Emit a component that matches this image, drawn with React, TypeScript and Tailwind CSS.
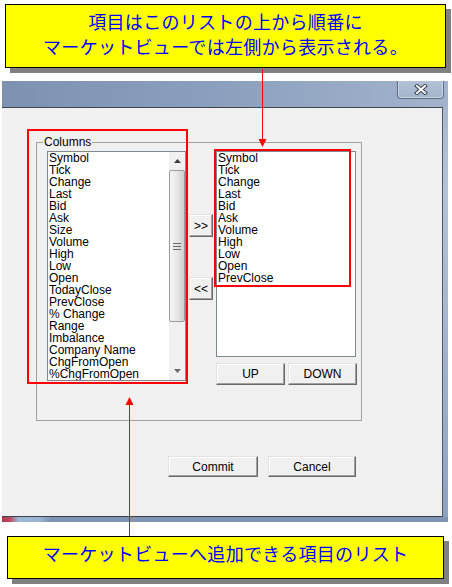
import React from "react";

const leftItems = [
  "Symbol", "Tick", "Change", "Last", "Bid", "Ask", "Size", "Volume", "High", "Low", "Open",
  "TodayClose", "PrevClose", "% Change", "Range", "Imbalance", "Company Name", "ChgFromOpen", "%ChgFromOpen",
];
const rightItems = ["Symbol", "Tick", "Change", "Last", "Bid", "Ask", "Volume", "High", "Low", "Open", "PrevClose"];

const btn =
  "flex items-center justify-center bg-[#f0f0f0] border border-t-[#e3e3e3] border-l-[#e3e3e3] border-r-[#696969] border-b-[#696969] shadow-[inset_-1px_-1px_0_#a0a0a0,inset_1px_1px_0_#ffffff] leading-[12px]";

export default function App() {
  return (
    <div className="relative w-[452px] h-[587px] bg-white overflow-hidden font-['Liberation_Sans',sans-serif] text-[12px] text-black">
      {/* top callout */}
      <div className="pt-[4px] pl-[5px]">
        <div className="w-[441px] h-[64px] bg-[#ffff00] border border-black shadow-[5px_5px_0_#808080] pt-[4px] text-center text-[#0000ff] text-[18px] tracking-[0.3px] leading-[25px] font-['Noto_Sans_CJK_JP',sans-serif]">
          <div>項目はこのリストの上から順番に</div>
          <div>マーケットビューでは左側から表示される。</div>
        </div>
      </div>

      {/* window */}
      <div className="mt-[13px] ml-[2px] w-[446px] flex flex-col">
        <div className="relative h-[26px] bg-[linear-gradient(to_right,#7d91b0,#8a9ebd_45%,#a2b3cb)]">
          <div className="absolute top-0 right-[4px] w-[47px] h-[18px] rounded-b-[4px] border border-t-0 border-[#5d6d87] bg-[linear-gradient(to_bottom,#b3c2d6,#a2b3cb)] shadow-[inset_1px_0_0_#c9d4e3,inset_-1px_-1px_0_#c9d4e3] flex items-center justify-center">
            <svg width="14" height="11" viewBox="0 0 14 11">
              <path d="M3 2 L11 9 M11 2 L3 9" stroke="#3b4454" strokeWidth="4" strokeLinecap="square" />
              <path d="M3 2 L11 9 M11 2 L3 9" stroke="#ffffff" strokeWidth="2" strokeLinecap="square" />
            </svg>
          </div>
        </div>
        <div className="flex">
          <div className="w-[441px] h-[410px] bg-[#f0f0f0] border-t border-r border-b border-t-[#3f4650] border-r-[#4f5866] border-b-[#3a4250] flex flex-col">
            <fieldset className="ml-[34px] mt-[28px] w-[325px] h-[285px] border border-[#a0a0a0] pl-[6px] pr-[4px]">
              <legend className="px-[1px] leading-[12px]">Columns</legend>
              <div className="flex items-start mt-[3px]">
                {/* left list */}
                <div className="ml-[4px] w-[139px] h-[230px] border border-[#828790] bg-white flex">
                  <div className="flex-1 pl-[1px] flex flex-col overflow-hidden">
                    {leftItems.map((t) => (
                      <div key={t} className="h-[12px] leading-[12px] whitespace-nowrap">
                        {t}
                      </div>
                    ))}
                  </div>
                  <div className="w-[16px] bg-[#f0f0f0] flex flex-col">
                    <div className="h-[18px] flex items-center justify-center">
                      <svg width="7" height="4" viewBox="0 0 7 4">
                        <path d="M3.5 0 L7 4 L0 4 Z" fill="#3c3c3c" />
                      </svg>
                    </div>
                    <div className="h-[152px] rounded-[2px] border border-[#9b9b9b] bg-[linear-gradient(to_right,#f6f6f6,#e6e6e6_50%,#cfcfcf)] flex items-center justify-center">
                      <svg width="8" height="7" viewBox="0 0 8 7">
                        <path d="M0 0.5 H8 M0 3.5 H8 M0 6.5 H8" stroke="#6a6a6a" strokeWidth="1" />
                      </svg>
                    </div>
                    <div className="flex-1" />
                    <div className="h-[18px] flex items-center justify-center">
                      <svg width="7" height="4" viewBox="0 0 7 4">
                        <path d="M0 0 L7 0 L3.5 4 Z" fill="#6a6a6a" />
                      </svg>
                    </div>
                  </div>
                </div>
                {/* move buttons */}
                <div className="ml-[3px] w-[24px] flex flex-col">
                  <div className={`${btn} mt-[63px] h-[23px]`}>&gt;&gt;</div>
                  <div className={`${btn} mt-[40px] h-[23px]`}>&lt;&lt;</div>
                </div>
                {/* right list */}
                <div className="ml-[3px] flex flex-col">
                  <div className="w-[140px] h-[206px] border border-[#828790] bg-white pl-[1px] flex flex-col">
                    {rightItems.map((t) => (
                      <div key={t} className="h-[12px] leading-[12px] whitespace-nowrap">
                        {t}
                      </div>
                    ))}
                  </div>
                  <div className="mt-[6px] flex gap-[3px]">
                    <div className={`${btn} w-[69px] h-[22px]`}>UP</div>
                    <div className={`${btn} w-[69px] h-[22px]`}>DOWN</div>
                  </div>
                </div>
              </div>
            </fieldset>
            <div className="ml-[34px] mt-[35px] w-[325px] pr-[5px] flex justify-end gap-[10px]">
              <div className={`${btn} w-[90px] h-[21px]`}>Commit</div>
              <div className={`${btn} w-[88px] h-[21px]`}>Cancel</div>
            </div>
          </div>
          <div className="flex-1 bg-[linear-gradient(to_bottom,#a7b8cf,#b4c3d7_20%,#8ea3c0)]" />
        </div>
        <div className="h-[5px] bg-[linear-gradient(to_right,#b3344f,#c0485f_8px,#9db7d7_16px,#9ab3d3_38px,#7f93b3_48px,#7f93b3)]" />
      </div>

      {/* bottom callout */}
      <div className="mt-[14px] ml-[7px] w-[437px] h-[43px] bg-[#ffff00] border border-black shadow-[5px_5px_0_#808080] pt-[4px] text-center text-[#0000ff] text-[18px] tracking-[0.3px] leading-[25px] font-['Noto_Sans_CJK_JP',sans-serif]">
        マーケットビューへ追加できる項目のリスト
      </div>

      {/* annotation overlay */}
      <div className="absolute left-[27px] top-[129px] w-[161px] h-[255px] border-2 border-[#ff0000] pointer-events-none" />
      <div className="absolute left-[214px] top-[149px] w-[137px] h-[138px] border-2 border-[#ff0000] pointer-events-none" />
      <svg className="absolute left-0 top-0 pointer-events-none" width="452" height="587" viewBox="0 0 452 587">
        <line x1="262.5" y1="69" x2="262.5" y2="141" stroke="#ff0000" strokeWidth="1" />
        <polygon points="258.5,139 266.5,139 262.5,147" fill="#ff0000" />
        <line x1="129.5" y1="403" x2="129.5" y2="536" stroke="#ff0000" strokeWidth="1" />
        <polygon points="125.5,405 133.5,405 129.5,397" fill="#ff0000" />
      </svg>
    </div>
  );
}
